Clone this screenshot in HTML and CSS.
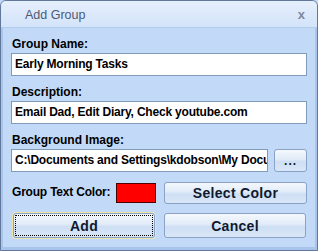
FILE: index.html
```html
<!DOCTYPE html>
<html lang="en">
<head>
    <meta charset="UTF-8">
    <title>Add Group</title>
    <link rel="stylesheet" href="styles.css">
</head>
<body>
    <div class="window">
        <div class="titlebar">
            <span class="title">Add Group</span>
            <span class="close">x</span>
        </div>
        <div class="content">
            <div class="form-group">
                <label>Group Name:</label>
                <div class="field">Early Morning Tasks</div>
            </div>
            <div class="form-group">
                <label>Description:</label>
                <div class="field">Email Dad, Edit Diary, Check youtube.com</div>
            </div>
            <div class="form-group">
                <label>Background Image:</label>
                <div class="row">
                    <div class="field path">C:\Documents and Settings\kdobson\My Docu</div>
                    <button class="btn browse">...</button>
                </div>
            </div>
            <div class="row color-row">
                <div class="half">
                    <label>Group Text Color:</label>
                    <span class="swatch"></span>
                </div>
                <button class="btn wide">Select Color</button>
            </div>
            <div class="row action-row">
                <button class="btn wide focused">Add</button>
                <button class="btn wide">Cancel</button>
            </div>
        </div>
    </div>
</body>
</html>
```

FILE: styles.css
```css
html, body {
    margin: 0;
    height: 100%;
}
body {
    font-family: "Liberation Sans", Arial, sans-serif;
    background: #c2daf8;
}
.window {
    box-sizing: border-box;
    width: 318px;
    height: 251px;
    border: 1px solid #62789a;
    border-radius: 6px 6px 0 0;
    background: #c2daf8;
    box-shadow: inset 2px 0 0 #a8c4ea, inset -2px 0 0 #a8c4ea, inset 0 -3px 0 #a8c4ea;
    overflow: hidden;
}
.titlebar {
    height: 26px;
    display: flex;
    align-items: center;
    justify-content: space-between;
    padding: 0 12px 0 24px;
    background: linear-gradient(#e6effc, #d3e3f9);
    border-bottom: 1px solid #b4cbe9;
}
.title {
    font-size: 12.5px;
    color: #4b5a76;
    margin-top: 2px;
}
.close {
    font-size: 13px;
    font-weight: bold;
    color: #7d899c;
}
.content {
    padding: 9px 10px 0 10px;
    display: flex;
    flex-direction: column;
}
.form-group {
    margin-bottom: 9px;
}
label {
    display: block;
    font-size: 12px;
    font-weight: bold;
    color: #000;
    height: 15px;
    line-height: 15px;
    margin: 0 0 1px 1px;
    white-space: nowrap;
}
.field {
    box-sizing: border-box;
    height: 23px;
    line-height: 21px;
    border: 1px solid #7f9db9;
    background: #fff;
    padding: 0 3px;
    font-size: 12px;
    font-weight: bold;
    letter-spacing: -0.2px;
    white-space: nowrap;
    overflow: hidden;
}
.row {
    display: flex;
    align-items: center;
}
.path {
    width: 258px;
}
.btn {
    box-sizing: border-box;
    font-family: "Liberation Sans", Arial, sans-serif;
    font-weight: bold;
    color: #0f1a2e;
    border: 1px solid #8aa2c4;
    border-radius: 3px;
    background: linear-gradient(#f4f8fd 0%, #e1ebf8 45%, #cfdff4 55%, #d9e6f7 100%);
    padding: 0;
}
.browse {
    width: 33px;
    height: 23px;
    margin-left: 6px;
    font-size: 12px;
    letter-spacing: 1px;
}
.color-row {
    margin-top: 1px;
    height: 21px;
}
.half {
    width: 145px;
    margin-right: 8px;
    flex: none;
    display: flex;
    align-items: center;
    justify-content: space-between;
}
.half label {
    margin: 0 0 0 1px;
    letter-spacing: -0.2px;
}
.swatch {
    display: inline-block;
    box-sizing: border-box;
    width: 40px;
    height: 20px;
    background: #ff0000;
    border: 1px solid #4a0000;
}
.wide {
    width: 143px;
    font-size: 14px;
    letter-spacing: 0.3px;
}
.color-row .wide {
    height: 22px;
}
.action-row {
    margin-top: 10px;
    justify-content: space-between;
    padding: 0 1px 0 2px;
}
.action-row .wide {
    height: 25px;
    width: 142px;
}
.focused {
    outline: 1px dotted #000;
    outline-offset: -3px;
    box-shadow: 0 0 0 1px #efe6a6;
}
```
